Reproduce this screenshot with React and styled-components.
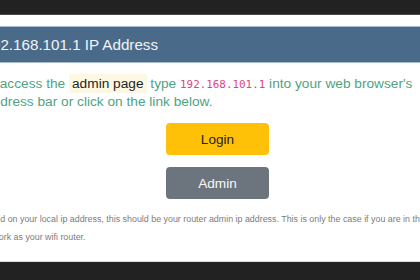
import styled, { createGlobalStyle } from 'styled-components'

const Global = createGlobalStyle`
  html, body {
    margin: 0;
    padding: 0;
    background: #222222;
    overflow: hidden;
  }
  body {
    font-family: "Liberation Sans", Arial, sans-serif;
  }
`

const TopBar = styled.div`
  height: 14px;
  background: #222222;
  border-bottom: 1px solid #4a4a4a;
`

const Page = styled.div`
  background: #ffffff;
  padding: 11px 0 15px;
  border-bottom: 1px solid #dcdcdc;
  overflow: hidden;
`

const Column = styled.div`
  margin-left: -15px;
  width: 465px;
`

const Header = styled.h2`
  margin: 0;
  height: 35px;
  display: flex;
  align-items: center;
  background: #4a6a8a;
  border-top: 1px solid #a8bccd;
  border-bottom: 1px solid #a8bccd;
  color: #f3f4f6;
  font-size: 15.2px;
  font-weight: normal;
  text-indent: -1.5px;
  white-space: nowrap;
`

const Lead = styled.p`
  margin: 12px 0 0;
  font-size: 13.7px;
  line-height: 17px;
  color: #4fa381;
  text-indent: -3.5px;
`

const Mark = styled.span`
  background: #fcf8e3;
  color: #1e1e1e;
  padding: 2px 3px;
`

const Code = styled.code`
  font-family: "DejaVu Sans Mono", "Liberation Mono", monospace;
  font-size: 10.9px;
  color: #e0457b;
`

const Actions = styled.div`
  display: flex;
  flex-direction: column;
  align-items: center;
  gap: 12px;
  margin-top: 13px;
`

const Button = styled.a`
  display: flex;
  align-items: center;
  justify-content: center;
  width: 103px;
  height: 32px;
  border-radius: 4px;
  font-size: 13.6px;
  text-decoration: none;
  background: ${p => (p.$variant === 'warning' ? '#ffc107' : '#6c757d')};
  color: ${p => (p.$variant === 'warning' ? '#222222' : '#f8f9fa')};
`

const Note = styled.p`
  margin: 11px 0 0 -5px;
  font-size: 8.9px;
  line-height: 18px;
  color: #7c7c7c;
  white-space: nowrap;
`

export default function App() {
  return (
    <>
      <Global />
      <TopBar />
      <Page>
        <Column>
          <Header>192.168.101.1 IP Address</Header>
          <Lead>
            To access the <Mark>admin page</Mark> type <Code>192.168.101.1</Code> into your web
            browser's address bar or click on the link below.
          </Lead>
          <Actions>
            <Button href="#" $variant="warning">Login</Button>
            <Button href="#" $variant="secondary">Admin</Button>
          </Actions>
          <Note>
            Based on your local ip address, this should be your router admin ip address. This is only the case if you are in the same
            <br />
            network as your wifi router.
          </Note>
        </Column>
      </Page>
    </>
  )
}
